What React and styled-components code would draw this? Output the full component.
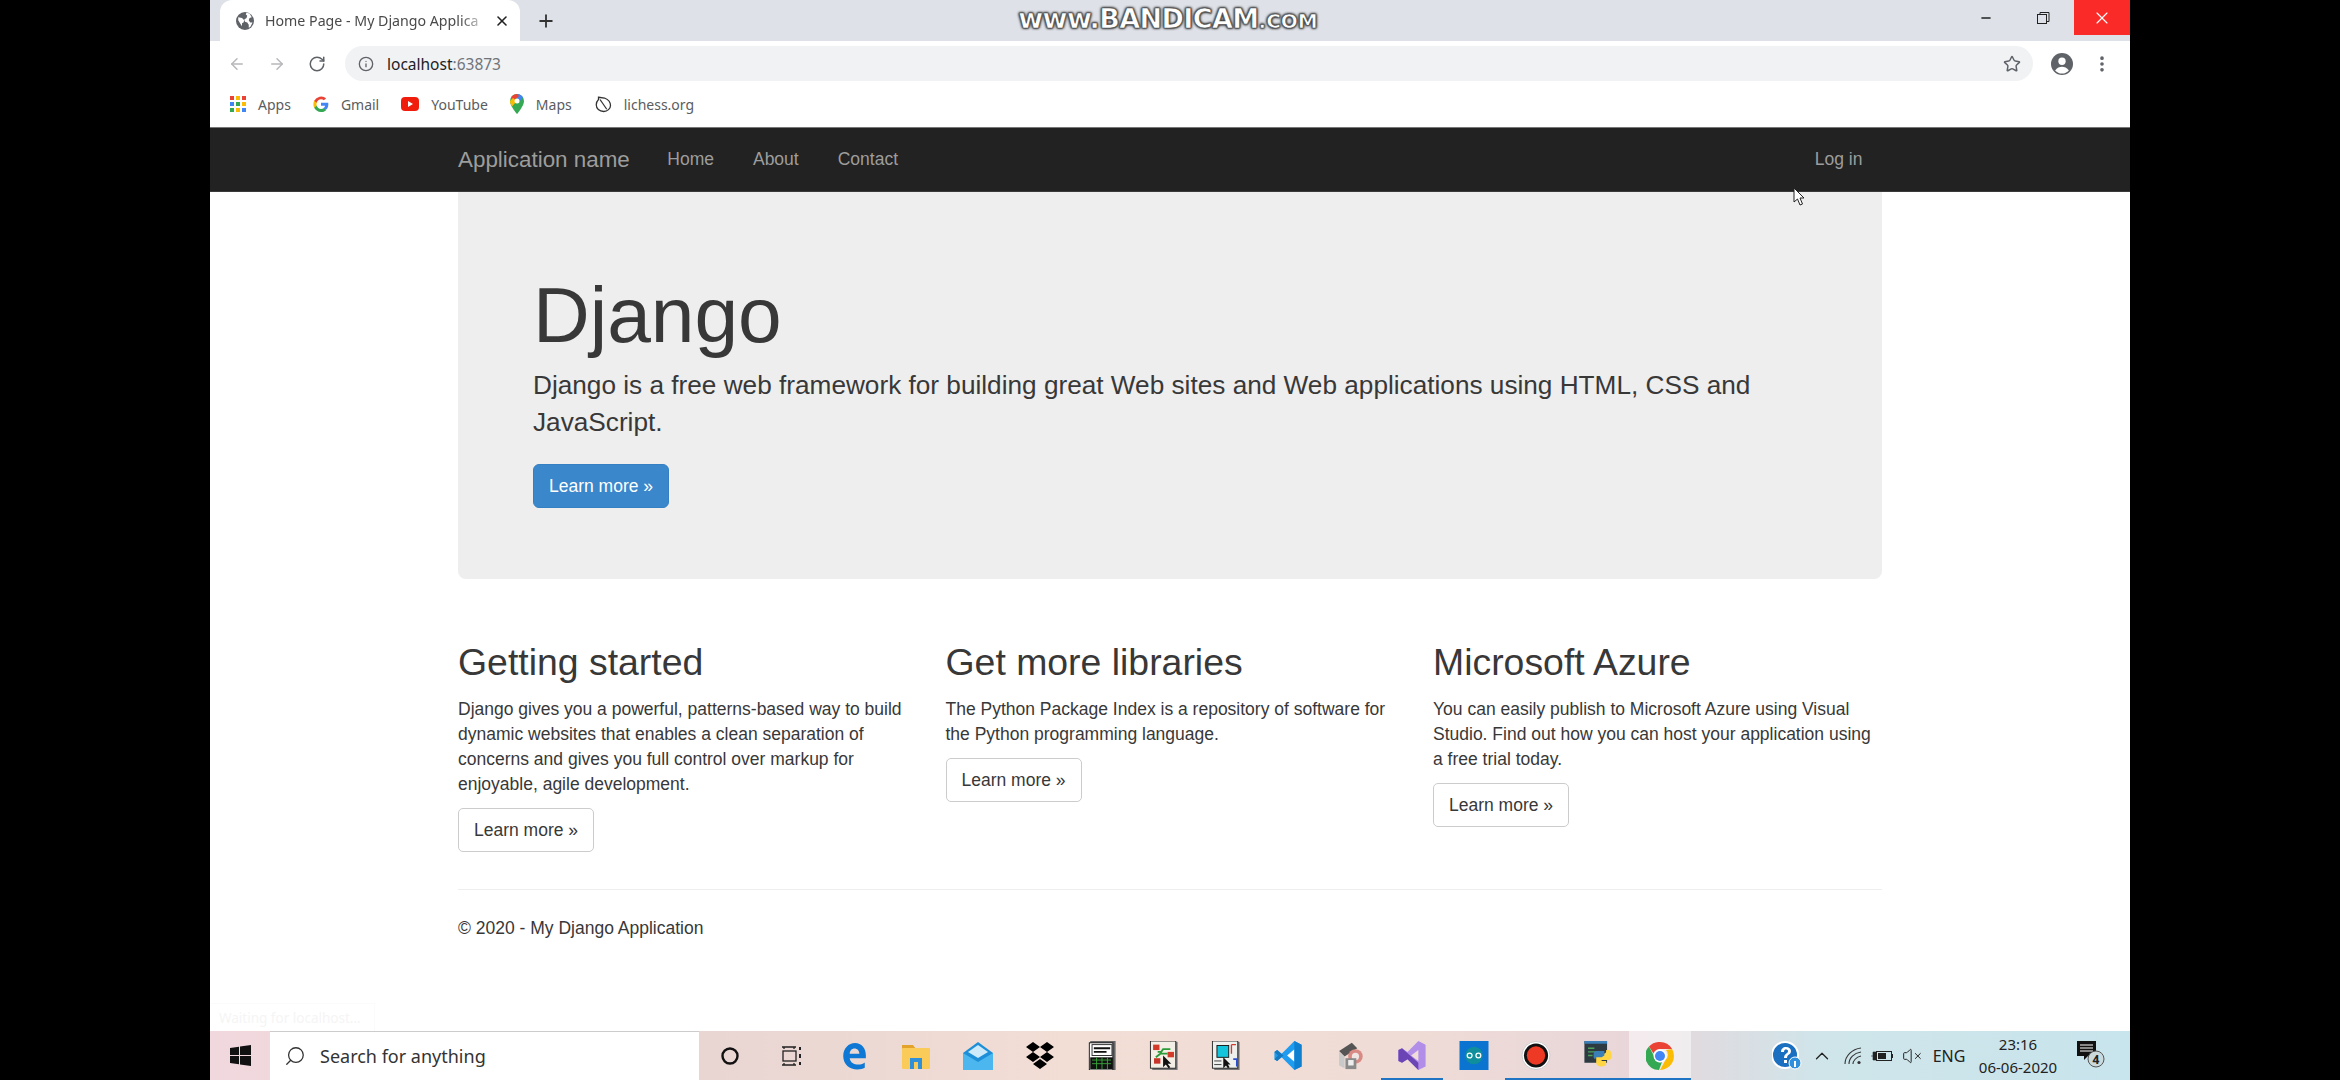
import React from 'react';
import styled, { createGlobalStyle } from 'styled-components';
import { ArrowLeft, ArrowRight, RotateCw, Info, Star, MoreVertical, Plus, X, Minus, ChevronUp, Search, VolumeX } from 'lucide-react';

const Global = createGlobalStyle`
  html, body { margin: 0; padding: 0; background: #000; }
  body { width: 2340px; height: 1080px; overflow: hidden; }
  * { box-sizing: border-box; }
`;
const Screen = styled.div`
  width: 2340px; height: 1080px; background: #000; display: flex; justify-content: center;
`;
const Window = styled.div`
  position: relative; width: 1920px; height: 1080px; display: flex; flex-direction: column; background: #fff; overflow: hidden;
`;
const TabStrip = styled.div`
  height: 41px; background: #dee1e7; display: flex; align-items: stretch; flex: none;
`;
const Tab = styled.div`
  width: 300px; margin-left: 10px; background: #fff; border-radius: 12px 12px 0 0; display: flex; align-items: center;
  padding-left: 16px; color: #444; flex: none;
`;
const TabTitle = styled.span`
  font: 14.2px "Noto Sans", sans-serif; width: 217px; margin-left: 11px; white-space: nowrap; color: #4a4a4a;
  -webkit-mask-image: linear-gradient(to right, #000 90%, rgba(0,0,0,.25));
`;
const TabClose = styled.span`
  display: flex; margin-left: 12px; color: #222;
`;
const NewTab = styled.span`
  display: flex; margin-left: 16px; align-items: center; color: #333;
`;
const Spacer = styled.div` flex: 1; `;
const WinControl = styled.div`
  width: ${p => p.$w}px; height: 35px; display: flex; align-items: center; justify-content: center;
  background: ${p => p.$close ? '#f92a27' : 'transparent'}; color: ${p => p.$close ? '#fff' : '#222'};
`;
const Toolbar = styled.div`
  height: 44px; display: flex; align-items: center; padding: 1px 0 0 7px; flex: none; background: #fff;
`;
const NavIcon = styled.span`
  width: 40px; flex: none; display: flex; justify-content: center; color: ${p => p.$dim ? '#b6b8bb' : '#5f6368'};
`;
const Omnibox = styled.div`
  margin: 0 -36px 0 8px; width: 1688px; height: 35px; border-radius: 18px; background: #f0f2f4; display: flex; align-items: center;
  padding-left: 13px; color: #5f6368; flex: none;
`;
const Url = styled.span`
  font: 15.5px "Noto Sans", sans-serif; margin-left: 13px; color: #202124;
  & > span { color: #70757a; }
`;
const ToolRight = styled.span`
  width: ${p => p.$w}px; margin-left: ${p => p.$ml || 0}px; display: flex; justify-content: center; color: #5f6368; flex: none;
  position: relative;
`;
const Bookmarks = styled.div`
  height: 42px; display: flex; align-items: center; padding: 0 0 4px 20px; flex: none; background: #fff;
`;
const Bookmark = styled.div`
  display: flex; align-items: center; gap: 12px; font: 14px "Noto Sans", sans-serif; color: #5a5c60;
  margin-right: 22px;
`;
const Navbar = styled.nav`
  height: 65px; background: #222; border-top: 1px solid #777; border-bottom: 1px solid #3a3a3a; flex: none;
`;
const NavInner = styled.div`
  width: 1424px; margin: 0 auto; height: 100%; display: flex; align-items: center; color: #9d9d9d;
  font-family: "Liberation Sans", Arial, sans-serif;
`;
const Brand = styled.span`
  font-size: 22.4px; margin-right: 18px;
`;
const NavLink = styled.span`
  font-size: 17.5px; padding: 0 19.5px;
`;
const Page = styled.main`
  width: 1424px; margin: 0 auto; flex: 1; font: 17.5px/25px "Liberation Sans", Arial, sans-serif; color: #383838;
`;
const Jumbotron = styled.section`
  height: 387px; background: #eee; border-radius: 0 0 8px 8px; padding: 80px 75px 0;
`;
const Title = styled.h1`
  font-size: 78.5px; line-height: 86px; font-weight: 400; margin: 0 0 9px; color: #383838;
`;
const Lead = styled.p`
  font-size: 26.2px; line-height: 36.5px; margin: 0 0 24px; width: 1240px; font-weight: 400;
`;
const PrimaryButton = styled.span`
  display: inline-flex; align-items: center; justify-content: center; width: 136px; height: 44px; background: #3a87cb;
  border: 1px solid #3580c2; border-radius: 6px; color: #fff; font-size: 17.5px;
`;
const Columns = styled.section`
  display: grid; grid-template-columns: repeat(3, 487.5px); margin-top: 62px; align-items: start;
`;
const Column = styled.article`
  padding-right: 20px; display: flex; flex-direction: column; align-items: flex-start;
`;
const Heading = styled.h2`
  font-size: 37.4px; line-height: 43px; font-weight: 400; margin: 0 0 13px; color: #383838;
`;
const Para = styled.p`
  margin: 0 0 11px; font-size: 17.5px; line-height: 25px;
`;
const DefaultButton = styled.span`
  display: inline-flex; align-items: center; justify-content: center; width: 136px; height: 44px; background: #fff;
  border: 1px solid #ccc; border-radius: 5px; font-size: 17.5px;
`;
const Rule = styled.hr`
  border: 0; border-top: 1px solid #eee; margin: 37px 0 26px;
`;
const Footer = styled.footer`
  font-size: 17.5px; line-height: 25px;
`;
const Taskbar = styled.div`
  height: 49px; flex: none; display: flex; align-items: stretch;
  background: linear-gradient(to right, #f1d8de 0%, #e9d5d2 26%, #f2ded5 45%, #efdcd6 62%, #e8d6da 74%, #cfe5ea 84%, #c8e4ec 100%);
`;
const StartCell = styled.div`
  width: 60px; display: flex; align-items: center; justify-content: center; flex: none;
`;
const SearchBox = styled.div`
  width: 429px; background: #fff; border-top: 1px solid #ccc; display: flex; align-items: center; padding-left: 14px; gap: 14px;
  font: 18px "Noto Sans", sans-serif; color: #333; flex: none;
`;
const Cell = styled.div`
  width: 62px; display: flex; align-items: center; justify-content: center; flex: none; position: relative;
  background: ${p => p.$active ? 'rgba(255,255,255,.5)' : 'transparent'};
  border-bottom: 2px solid ${p => p.$running ? '#1f74c4' : 'transparent'};
  padding-top: 2px;
  & > svg { max-height: 29px; }
`;
const Tray = styled.div`
  flex: 1; display: flex; align-items: center; padding-left: 79px; color: #222;
`;
const TraySlot = styled.div`
  width: ${p => p.$w}px; display: flex; align-items: center; justify-content: center; flex: none;
  font: 16px "Noto Sans", sans-serif;
`;
const Clock = styled.div`
  width: 92px; flex: none; text-align: center; font: 15px/23px "Noto Sans", sans-serif; color: #222;
`;
const Watermark = styled.div`
  position: absolute; left: 758px; top: 5px; width: 400px; text-align: center; font: 700 27px/28px "DejaVu Sans", sans-serif; color: #fff;
  letter-spacing: -0.6px; -webkit-text-stroke: 0.7px #555; text-shadow: 0 0 3px #222, 0 0 3px #222, 0 0 2px #222;
  & > small { font-size: 20px; letter-spacing: 0; }
`;
const Status = styled.div`
  position: absolute; left: 0; bottom: 49px; height: 28px; width: 165px; padding-left: 9px;
  font: 13.5px/28px "Noto Sans", sans-serif; color: #f5f5f5; border-right: 1px solid #fbfbfb; border-top: 1px solid #fbfbfb;
`;
const Pointer = styled.svg`
  position: absolute; left: 1583px; top: 187px;
`;

const Globe = () => (
  <svg width="18" height="18" viewBox="0 0 24 24"><circle cx="12" cy="12" r="12" fill="#5f6368"/><path d="M3 7l5 1 3 3-1 3-2 1v4l-2-3-3-5zM14 1l4 1 3 5-3 1-1 3 2 3h3l-3 6-2 1v-4l-2-3-3-1-1-3 3-2 1-3-2-2z" fill="#fff"/></svg>
);
const Apps = () => (
  <svg width="16" height="16" viewBox="0 0 16 16">
    {[['#ea4335','#fbbc05','#ea4335'],['#4285f4','#34a853','#fbbc05'],['#34a853','#fbbc05','#4285f4']].map((r,y)=>r.map((c,x)=>(
      <rect key={`${x}${y}`} x={x*6} y={y*6} width="4" height="4" fill={c}/>
    )))}
  </svg>
);
const GoogleG = () => (
  <svg width="16" height="16" viewBox="0 0 24 24">
    <path d="M23 12.3c0-.8-.1-1.600-.2-2.300H12v4.500h6.200c-.3 1.400-1.100 2.600-2.300 3.400v2.900h3.700c2.200-2 3.400-5 3.400-8.500z" fill="#4285f4"/>
    <path d="M12 24c3.100 0 5.700-1 7.600-2.800l-3.700-2.900c-1 .7-2.300 1.100-3.900 1.100-3 0-5.500-2-6.400-4.700H1.800v3A12 12 0 0 0 12 24z" fill="#34a853"/>
    <path d="M5.600 14.700a7 7 0 0 1 0-4.500v-3H1.800a12 12 0 0 0 0 10.500z" fill="#fbbc05"/>
    <path d="M12 4.800c1.700 0 3.200.6 4.400 1.700l3.300-3.300A12 12 0 0 0 1.800 7.200l3.800 3C6.500 6.800 9 4.800 12 4.800z" fill="#ea4335"/>
  </svg>
);
const YouTube = () => (
  <svg width="18" height="16" viewBox="0 0 18 16"><rect x="0" y="1" width="18" height="14" rx="4" fill="#f01c0c"/><path d="M7 5l5 3-5 3z" fill="#fff"/></svg>
);
const MapsPin = () => (
  <svg width="14" height="20" viewBox="0 0 14 20">
    <path d="M7 0a7 7 0 0 0-7 7c0 5 7 13 7 13s7-8 7-13a7 7 0 0 0-7-7z" fill="#34a853"/>
    <path d="M7 0a7 7 0 0 1 6 3.500L8 9z" fill="#4285f4"/><path d="M1.500 2.500A7 7 0 0 1 7 0l2 2-7 6z" fill="#ea4335"/>
    <path d="M0 7c0 2 1 4 2 5.500L7 7 3 4z" fill="#fbbc05"/><circle cx="7" cy="7" r="2.500" fill="#fff"/>
  </svg>
);
const Lichess = () => (
  <svg width="18" height="18" viewBox="0 0 24 24" fill="none" stroke="#333" strokeWidth="1.700"><path d="M6 3l8 1c5 2 8 6 8 10 0 4-4 8-9 8-6 0-10-4-10-9 0-3 1-5 3-7z"/><path d="M8 6l9 13"/></svg>
);
const Profile = () => (
  <svg width="22" height="22" viewBox="0 0 24 24"><circle cx="12" cy="12" r="12" fill="#5f6368"/><circle cx="12" cy="9" r="4" fill="#fff"/><path d="M4.500 19c2-3 5-4 7.500-4s5.500 1 7.500 4a10 10 0 0 1-15 0z" fill="#fff"/></svg>
);
const Restore = () => (
  <svg width="14" height="14" viewBox="0 0 14 14" fill="none" stroke="#222" strokeWidth="1"><rect x="1.500" y="3.500" width="9" height="9"/><path d="M4 3.500V1.500h9v9h-2.500"/></svg>
);
const Win = () => (
  <svg width="21" height="21" viewBox="0 0 21 21" fill="#111"><path d="M0 3l9-1.300V10H0zM10 1.500L21 0v10H10zM0 11h9v8.300L0 18zM10 11h11v10l-11-1.500z"/></svg>
);
const Cortana = () => (
  <svg width="20" height="20" viewBox="0 0 20 20"><circle cx="10" cy="10" r="7.500" fill="none" stroke="#111" strokeWidth="2.400"/></svg>
);
const TaskView = () => (
  <svg width="22" height="22" viewBox="0 0 22 22" fill="none" stroke="#222" strokeWidth="1.300"><path d="M1 2h14M1 20h14M3 2v2M13 2v2M3 18v2M13 18v2"/><rect x="2" y="6" width="13" height="10"/><path d="M19 2v3M19 9v4M19 17v3" strokeWidth="2"/></svg>
);
const Edge = () => (
  <svg width="26" height="28" viewBox="0 0 24 26"><path d="M2 13C2 6 7 1 13 1c6 0 10 5 10 11v3H8c.5 4 4 6 8 6 2.500 0 5-1 6-2v5c-2 1-4 1.500-7 1.500C8 25.500 2 21 2 13zm6-2h9c0-3-2-5-4.500-5S8 8 8 11z" fill="#0f78d4"/></svg>
);
const Folder = () => (
  <svg width="28" height="26" viewBox="0 0 28 26"><path d="M0 2h11l3 4H0z" fill="#e3a32b"/><rect y="5" width="28" height="21" rx="1" fill="#fbcb5a"/><path d="M8 26V15h12v11h-4v-7h-4v7z" fill="#2f8fd8"/></svg>
);
const Mail = () => (
  <svg width="30" height="28" viewBox="0 0 30 28"><path d="M15 0l15 11v17H0V11z" fill="#1c8fd8"/><path d="M0 11l15 9 15-9v17H0z" fill="#4cb6ee"/><path d="M5 10l10-7 10 7-10 6z" fill="#cdeafa"/></svg>
);
const Dropbox = () => (
  <svg width="30" height="28" viewBox="0 0 30 28" fill="#000"><path d="M8 0l7 5-7 5-7-5zM22 0l7 5-7 5-7-5zM8 10l7 5-7 5-7-5zM22 10l7 5-7 5-7-5zM15 17l7 5-7 5-7-5z"/></svg>
);
const ModelSim = () => (
  <svg width="30" height="32" viewBox="0 0 30 32"><rect x="2" y="0" width="28" height="32" fill="#666"/><rect x="1" y="2" width="26" height="30" fill="#fff" stroke="#111"/><rect x="4" y="4" width="22" height="12" fill="#fff" stroke="#222"/><path d="M6 8h18M6 12h14" stroke="#111" strokeWidth="2"/><rect x="2" y="18" width="25" height="13" fill="#111"/><path d="M4 21h21M4 25h21M9 18v13M15 18v13M21 18v13" stroke="#3aa63a"/></svg>
);
const Board = () => (
  <svg width="30" height="32" viewBox="0 0 30 32"><rect x="2" y="1" width="28" height="31" fill="#777"/><rect width="28" height="30" fill="#f4efe6" stroke="#222"/><rect x="3" y="4" width="7" height="6" fill="#d23a2a"/><rect x="19" y="12" width="7" height="6" fill="#d23a2a"/><rect x="4" y="19" width="7" height="6" fill="#c8342a"/><path d="M8 12h4l2-3h8M6 18l5-4h8" stroke="#2a9a3a" strokeWidth="2" fill="none"/><path d="M14 16v13l3-3 3 4 2-1-3-4h4z" fill="#111"/></svg>
);
const Chip = () => (
  <svg width="30" height="32" viewBox="0 0 30 32"><rect x="2" y="1" width="28" height="31" fill="#777"/><rect width="28" height="30" fill="#eef0ee" stroke="#222"/><rect x="5" y="5" width="13" height="13" fill="#12c4dc" stroke="#111"/><path d="M21 4h5M21 4v10" stroke="#d23a2a" strokeWidth="1.500"/><path d="M23 20h4v8" stroke="#2a4fd0" strokeWidth="2" fill="none"/><path d="M12 18v12l3-3 2 3 2-1-2-3h3z" fill="#111"/><path d="M2 22h8M2 26h8" stroke="#333"/></svg>
);
const VSCode = () => (
  <svg width="30" height="32" viewBox="0 0 30 32"><path d="M22 0l8 4v24l-8 4L8 18l-5 4-3-2v-8l3-2 5 4z" fill="#1f9cf0"/><path d="M22 9l-8 7 8 7z" fill="#fff"/><path d="M22 0l8 4v24l-8 4z" fill="#0f7fd0"/><path d="M0 12l3-2 7 6-7 6-3-2 4-4z" fill="#1678bf"/></svg>
);
const Tools = () => (
  <svg width="30" height="32" viewBox="0 0 30 32"><path d="M3 11L17 2l6 6-14 9z" fill="#555"/><path d="M3 12l6 5v13l-6-3z" fill="#c9c9c9"/><circle cx="21" cy="17" r="8" fill="#d98a85"/><circle cx="21" cy="17" r="4" fill="#efe5e2"/><rect x="10" y="19" width="12" height="12" fill="#8a8a8a"/><rect x="13" y="21" width="6" height="6" fill="#eee"/></svg>
);
const VisualStudio = () => (
  <svg width="30" height="32" viewBox="0 0 30 32"><path d="M22 0l8 4v24l-8 4-12-12-6 4-4-2V10l4-2 6 4z" fill="#b28ee8"/><path d="M4 11v10l5-5zM22 10l-8 6 8 6z" fill="#f0ddd8"/><path d="M0 10l4-2 18 16v8L10 20l-6 4-4-2z" fill="#6b45b5"/></svg>
);
const Arduino = () => (
  <svg width="30" height="30" viewBox="0 0 30 30"><rect width="30" height="30" fill="#0a74d0"/><circle cx="15" cy="15" r="9" fill="#0f8e9c"/><path d="M13 15a2.500 2.500 0 1 1-5 0 2.500 2.500 0 0 1 5 0zM22 15a2.500 2.500 0 1 1-5 0 2.500 2.500 0 0 1 5 0z" fill="none" stroke="#fff" strokeWidth="1.300"/></svg>
);
const Bandicam = () => (
  <svg width="30" height="30" viewBox="0 0 30 30"><circle cx="15" cy="15" r="14.500" fill="#fff" stroke="#ccc"/><circle cx="15" cy="15" r="12.500" fill="#111"/><circle cx="15" cy="15" r="9.500" fill="#ee3a24"/></svg>
);
const PythonIde = () => (
  <svg width="30" height="32" viewBox="0 0 30 32"><rect width="25" height="24" fill="#2e3a42"/><rect width="25" height="3" fill="#3a7fb8"/><path d="M4 8h7M4 12h11M4 16h5" stroke="#4ca35a" strokeWidth="1.500"/><path d="M13 17c0-2 1-3 3-3h5c2 0 3-1 3-3v-1h3c1 0 3 2 3 6s-2 5-3 5h-8v1h5v3c0 2-3 3-6 3s-5-2-5-4z" fill="#ffd544"/><path d="M12 20c-1 0-2-1-2-4s1-5 3-5h9v5l-3 2h-6z" fill="#3a7fb8"/></svg>
);
const Chrome = () => (
  <svg width="28" height="28" viewBox="0 0 28 28">
    <path d="M14 0a14 14 0 0 1 12.100 7H14a7 7 0 0 0-6.500 4.500L3 4.500A14 14 0 0 1 14 0z" fill="#ea4335"/>
    <path d="M26.100 7A14 14 0 0 1 14 28l5.500-10A7 7 0 0 0 20 8z" fill="#fbbc05"/>
    <path d="M3 4.500L8 14a6 6 0 0 0 8 6l-3 8A14 14 0 0 1 3 4.500z" fill="#34a853"/>
    <circle cx="14" cy="14" r="6.500" fill="#fff"/><circle cx="14" cy="14" r="5" fill="#4285f4"/>
  </svg>
);
const Help = () => (
  <svg width="30" height="30" viewBox="0 0 30 30"><circle cx="13" cy="14" r="13" fill="#1a6fc0" stroke="#fff" strokeWidth="2"/><path d="M9 11c0-3 2-5 5-5s5 2 5 4c0 4-4 3-4 7h-3c0-5 4-4 4-7 0-1-1-1.500-2-1.500s-2 .5-2 2.500zM12 19h3v3h-3z" fill="#fff"/><circle cx="23" cy="22" r="6" fill="#2f8fdc" stroke="#fff"/><rect x="22" y="20" width="2" height="6" fill="#fff"/></svg>
);
const Wifi = () => (
  <svg width="20" height="18" viewBox="0 0 20 18" fill="none" stroke="#333" strokeWidth="1.100"><path d="M1 17C1 9 8 2 17 1M5 17C5 11 10 6 17 5M9 17c0-3 3-7 8-8"/><circle cx="15" cy="15.500" r="1.600" fill="#333" stroke="none"/></svg>
);
const Battery = () => (
  <svg width="22" height="14" viewBox="0 0 22 14"><rect x="5.500" y="2.500" width="15" height="9" fill="none" stroke="#222"/><rect x="7" y="4" width="8" height="6" fill="#222"/><rect x="21" y="5" width="1" height="4" fill="#222"/><path d="M0 7h3M2 3h3v8H2z" fill="#222" stroke="#222" strokeWidth=".6"/></svg>
);
const Notify = () => (
  <svg width="32" height="32" viewBox="0 0 32 32"><path d="M1 1h19v15h-8l-4 4v-4H1z" fill="#111"/><path d="M4 5h13M4 8h13M4 11h13" stroke="#fff"/><circle cx="20" cy="19" r="8" fill="#c9d9dc" stroke="#555"/><text x="20" y="23.500" textAnchor="middle" fontSize="12" fontWeight="700" fontFamily="Noto Sans, sans-serif" fill="#222">4</text></svg>
);

const columns = [
  ['Getting started', <>Django gives you a powerful, patterns-based way to build<br/>dynamic websites that enables a clean separation of<br/>concerns and gives you full control over markup for<br/>enjoyable, agile development.</>],
  ['Get more libraries', <>The Python Package Index is a repository of software for<br/>the Python programming language.</>],
  ['Microsoft Azure', <>You can easily publish to Microsoft Azure using Visual<br/>Studio. Find out how you can host your application using<br/>a free trial today.</>],
];
const taskIcons = [
  [Cortana], [TaskView], [Edge], [Folder], [Mail], [Dropbox], [ModelSim], [Board], [Chip], [VSCode], [Tools],
  [VisualStudio, true], [Arduino], [Bandicam, true], [PythonIde, true], [Chrome, true, true],
];

export default function App() {
  return (
    <Screen>
      <Global />
      <Window>
        <TabStrip>
          <Tab>
            <Globe />
            <TabTitle>Home Page - My Django Applica</TabTitle>
            <TabClose><X size={16} strokeWidth={2.4} /></TabClose>
          </Tab>
          <NewTab><Plus size={20} strokeWidth={2.2} /></NewTab>
          <Spacer />
          <WinControl $w={52}><Minus size={14} strokeWidth={2.4} /></WinControl>
          <WinControl $w={62}><Restore /></WinControl>
          <WinControl $w={56} $close><X size={20} strokeWidth={1.4} /></WinControl>
        </TabStrip>
        <Toolbar>
          <NavIcon $dim><ArrowLeft size={18} /></NavIcon>
          <NavIcon $dim><ArrowRight size={18} /></NavIcon>
          <NavIcon><RotateCw size={18} /></NavIcon>
          <Omnibox>
            <Info size={16} />
            <Url>localhost<span>:63873</span></Url>
          </Omnibox>
          <ToolRight $w={30}><Star size={18} /></ToolRight>
          <ToolRight $w={44} $ml={13}><Profile /></ToolRight>
          <ToolRight $w={36}><MoreVertical size={20} strokeWidth={2.4} /></ToolRight>
        </Toolbar>
        <Bookmarks>
          <Bookmark><Apps />Apps</Bookmark>
          <Bookmark><GoogleG />Gmail</Bookmark>
          <Bookmark><YouTube />YouTube</Bookmark>
          <Bookmark><MapsPin />Maps</Bookmark>
          <Bookmark><Lichess />lichess.org</Bookmark>
        </Bookmarks>
        <Navbar>
          <NavInner>
            <Brand>Application name</Brand>
            <NavLink>Home</NavLink>
            <NavLink>About</NavLink>
            <NavLink>Contact</NavLink>
            <Spacer />
            <NavLink>Log in</NavLink>
          </NavInner>
        </Navbar>
        <Page>
          <Jumbotron>
            <Title>Django</Title>
            <Lead>Django is a free web framework for building great Web sites and Web applications using HTML, CSS and JavaScript.</Lead>
            <PrimaryButton>Learn more »</PrimaryButton>
          </Jumbotron>
          <Columns>
            {columns.map(([title, text]) => (
              <Column key={title}>
                <Heading>{title}</Heading>
                <Para>{text}</Para>
                <DefaultButton>Learn more »</DefaultButton>
              </Column>
            ))}
          </Columns>
          <Rule />
          <Footer>© 2020 - My Django Application</Footer>
        </Page>
        <Taskbar>
          <StartCell><Win /></StartCell>
          <SearchBox><Search size={22} strokeWidth={1.4} style={{ transform: 'scaleX(-1)' }} />Search for anything</SearchBox>
          {taskIcons.map(([Icon, running, active], i) => (
            <Cell key={i} $running={running} $active={active}><Icon /></Cell>
          ))}
          <Tray>
            <TraySlot $w={34}><Help /></TraySlot>
            <TraySlot $w={36}><ChevronUp size={22} strokeWidth={1.4} /></TraySlot>
            <TraySlot $w={27}><Wifi /></TraySlot>
            <TraySlot $w={30}><Battery /></TraySlot>
            <TraySlot $w={29}><VolumeX size={20} strokeWidth={1.2} /></TraySlot>
            <TraySlot $w={46}>ENG</TraySlot>
            <Clock>23:16<br />06-06-2020</Clock>
            <TraySlot $w={56}><Notify /></TraySlot>
          </Tray>
        </Taskbar>
        <Watermark>www.BANDICAM<small>.COM</small></Watermark>
        <Status>Waiting for localhost...</Status>
        <Pointer width="14" height="20" viewBox="0 0 14 20"><path d="M1 1v14l3.500-3 2.500 6 2.500-1-2.500-6H11z" fill="#fff" stroke="#222" strokeWidth="1"/></Pointer>
      </Window>
    </Screen>
  );
}
